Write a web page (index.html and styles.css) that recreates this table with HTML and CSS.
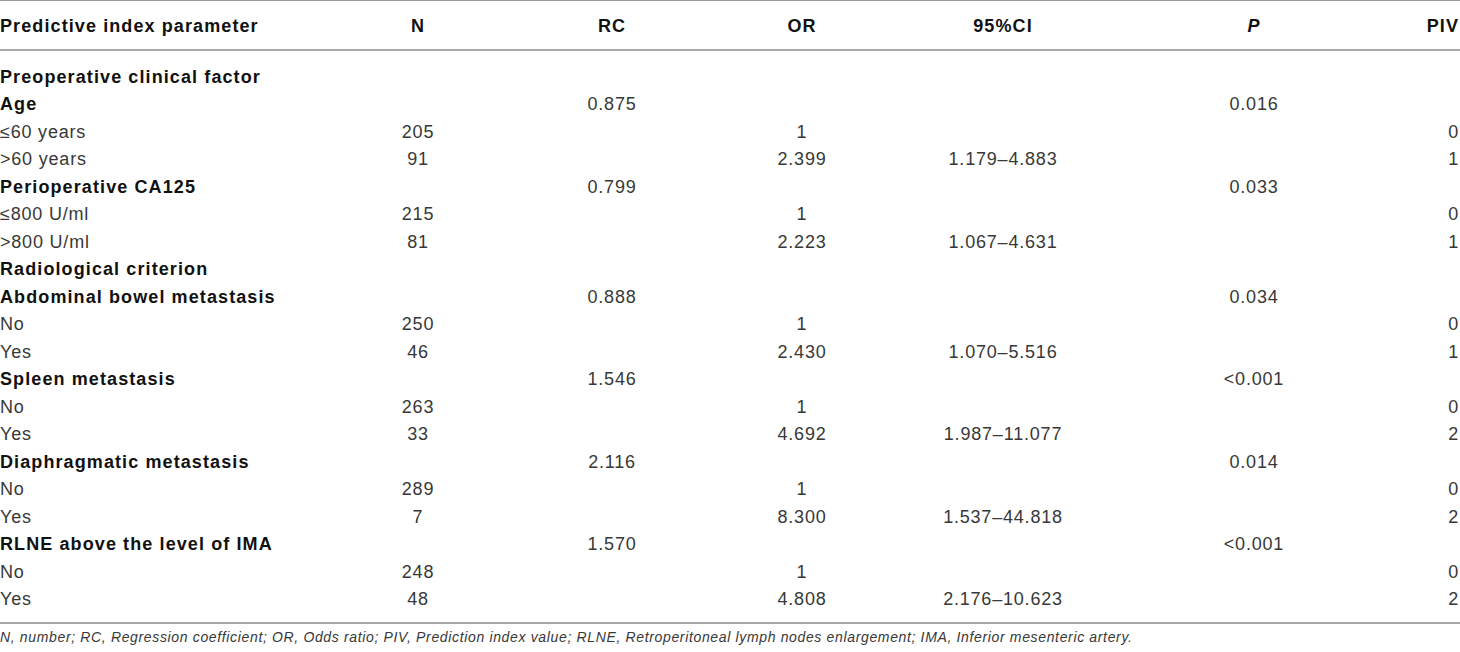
FILE: index.html
```html
<!DOCTYPE html>
<html>
<head>
<meta charset="utf-8">
<link rel="stylesheet" href="styles.css">
</head>
<body>
<div class="wrap">
<table class="tbl">
<colgroup>
<col class="c1"><col class="c2"><col class="c3"><col class="c4"><col class="c5"><col class="c6"><col class="c7">
</colgroup>
<thead>
<tr>
<th class="left">Predictive index parameter</th>
<th>N</th>
<th>RC</th>
<th>OR</th>
<th>95%CI</th>
<th><i>P</i></th>
<th class="right">PIV</th>
</tr>
</thead>
<tbody>
<tr class="first"><td class="left b">Preoperative clinical factor</td><td></td><td></td><td></td><td></td><td></td><td></td></tr>
<tr><td class="left b">Age</td><td></td><td>0.875</td><td></td><td></td><td>0.016</td><td class="right"></td></tr>
<tr><td class="left">≤60 years</td><td>205</td><td></td><td>1</td><td></td><td></td><td class="right">0</td></tr>
<tr><td class="left">&gt;60 years</td><td>91</td><td></td><td>2.399</td><td>1.179–4.883</td><td></td><td class="right">1</td></tr>
<tr><td class="left b">Perioperative CA125</td><td></td><td>0.799</td><td></td><td></td><td>0.033</td><td class="right"></td></tr>
<tr><td class="left">≤800 U/ml</td><td>215</td><td></td><td>1</td><td></td><td></td><td class="right">0</td></tr>
<tr><td class="left">&gt;800 U/ml</td><td>81</td><td></td><td>2.223</td><td>1.067–4.631</td><td></td><td class="right">1</td></tr>
<tr><td class="left b">Radiological criterion</td><td></td><td></td><td></td><td></td><td></td><td class="right"></td></tr>
<tr><td class="left b">Abdominal bowel metastasis</td><td></td><td>0.888</td><td></td><td></td><td>0.034</td><td class="right"></td></tr>
<tr><td class="left">No</td><td>250</td><td></td><td>1</td><td></td><td></td><td class="right">0</td></tr>
<tr><td class="left">Yes</td><td>46</td><td></td><td>2.430</td><td>1.070–5.516</td><td></td><td class="right">1</td></tr>
<tr><td class="left b">Spleen metastasis</td><td></td><td>1.546</td><td></td><td></td><td>&lt;0.001</td><td class="right"></td></tr>
<tr><td class="left">No</td><td>263</td><td></td><td>1</td><td></td><td></td><td class="right">0</td></tr>
<tr><td class="left">Yes</td><td>33</td><td></td><td>4.692</td><td>1.987–11.077</td><td></td><td class="right">2</td></tr>
<tr><td class="left b">Diaphragmatic metastasis</td><td></td><td>2.116</td><td></td><td></td><td>0.014</td><td class="right"></td></tr>
<tr><td class="left">No</td><td>289</td><td></td><td>1</td><td></td><td></td><td class="right">0</td></tr>
<tr><td class="left">Yes</td><td>7</td><td></td><td>8.300</td><td>1.537–44.818</td><td></td><td class="right">2</td></tr>
<tr><td class="left b">RLNE above the level of IMA</td><td></td><td>1.570</td><td></td><td></td><td>&lt;0.001</td><td class="right"></td></tr>
<tr><td class="left">No</td><td>248</td><td></td><td>1</td><td></td><td></td><td class="right">0</td></tr>
<tr class="last"><td class="left">Yes</td><td>48</td><td></td><td>4.808</td><td>2.176–10.623</td><td></td><td class="right">2</td></tr>
</tbody>
</table>
<p class="note">N, number; RC, Regression coefficient; OR, Odds ratio; PIV, Prediction index value; RLNE, Retroperitoneal lymph nodes enlargement; IMA, Inferior mesenteric artery.</p>
</div>
</body>
</html>
```

FILE: styles.css
```css
html, body {
  margin: 0;
  padding: 0;
  background: #ffffff;
}

body {
  font-family: "Liberation Sans", Arial, Helvetica, sans-serif;
  color: #383838;
}

.wrap {
  width: 1460px;
}

.tbl {
  width: 1460px;
  border-collapse: collapse;
  table-layout: fixed;
  font-size: 18px;
  letter-spacing: 0.8px;
}

.c1 { width: 340px; }
.c2 { width: 156px; }
.c3 { width: 232px; }
.c4 { width: 148px; }
.c5 { width: 254px; }
.c6 { width: 248px; }
.c7 { width: 82px; }

.tbl thead tr {
  border-top: 1px solid #9a9a9a;
  border-bottom: 2px solid #a8a8a8;
}

.tbl th {
  height: 49px;
  padding: 3px 0 0 0;
  font-weight: bold;
  color: #111;
  letter-spacing: 1.1px;
  text-align: center;
  vertical-align: middle;
  box-sizing: border-box;
}

.tbl td {
  height: 27.5px;
  line-height: 27.5px;
  padding: 0;
  text-align: center;
  white-space: nowrap;
  font-weight: normal;
}

.tbl .left {
  text-align: left;
  padding-left: 0;
}

.tbl .right {
  text-align: right;
  padding-right: 1px;
}

.tbl td.b {
  font-weight: bold;
  color: #111;
  letter-spacing: 1.1px;
}

.tbl tr.first td {
  padding-top: 13px;
}

.tbl tr.last td {
  padding-bottom: 8px;
}

.tbl tbody tr.last {
  border-bottom: 2px solid #a8a8a8;
}

.note {
  margin: 2px 0 0 0;
  font-size: 14px;
  line-height: 22px;
  letter-spacing: 0.65px;
  font-style: italic;
  color: #383838;
}
```
